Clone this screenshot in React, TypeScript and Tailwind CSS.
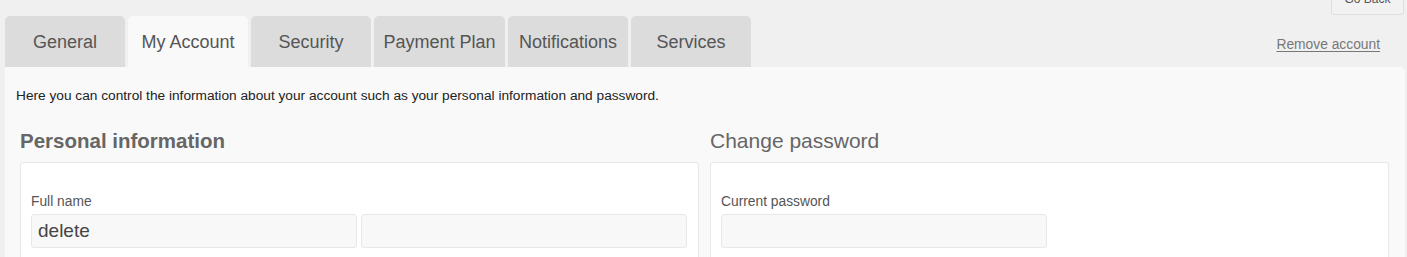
const TABS = ['General', 'My Account', 'Security', 'Payment Plan', 'Notifications', 'Services'];

function Tab({ label, active }: { label: string; active: boolean }) {
  const width = label === 'Payment Plan' ? 'w-[131px]' : 'w-[120px]';
  return (
    <div
      className={`${width} h-[51px] flex items-center justify-center pt-[2px] rounded-t-[5px] text-[18px] text-[#555] ${
        active ? 'bg-[#f9f9f9]' : 'bg-[#dcdcdc]'
      }`}
    >
      {label}
    </div>
  );
}

function Input({ value }: { value?: string }) {
  return (
    <div className="w-[326px] h-[34px] flex items-center px-[6px] pt-[1px] bg-[#f8f8f8] border border-[#e8e8e8] rounded-[3px] text-[19px] text-[#444]">
      {value}
    </div>
  );
}

export default function App() {
  return (
    <div
      className="h-[257px] overflow-hidden bg-[#f0f0f0] pl-[5px] pr-[2px]"
      style={{ fontFamily: '"Liberation Sans", Arial, sans-serif' }}
    >
      {/* header: tabs + actions */}
      <div className="flex justify-between">
        <div className="flex gap-[3px] pt-[16px]">
          {TABS.map((t) => (
            <Tab key={t} label={t} active={t === 'My Account'} />
          ))}
        </div>
        <div className="flex flex-col items-end">
          <button className="mt-[-17px] mr-[1px] w-[73px] h-[32px] border border-[#dedede] rounded-[3px] bg-[#f2f2f2] text-[12px] text-[#555] leading-[14px]">
            Go Back
          </button>
          <a href="#" className="mt-[22px] mr-[25px] text-[13.8px] leading-[16px] text-[#777] underline underline-offset-[2px]">
            Remove account
          </a>
        </div>
      </div>

      {/* panel */}
      <div className="bg-[#f9f9f9] rounded-tr-[5px] pl-[11px] pr-[16px] pt-[22px] h-[300px]">
        <p className="text-[13.7px] text-[#222] leading-[14px]">
          Here you can control the information about your account such as your personal information and password.
        </p>
        <div className="grid grid-cols-2 gap-[11px] pl-[4px] mt-[27px]">
          <div>
            <h2 className="text-[20.5px] font-bold text-[#666] leading-[22px]">Personal information</h2>
            <div className="mt-[10px] bg-white border border-[#e8e8e8] rounded-[3px] px-[10px] pt-[32px] h-[120px]">
              <div className="text-[13.8px] text-[#555] leading-[14px]">Full name</div>
              <div className="flex gap-[4px] mt-[5px]">
                <Input value="delete" />
                <Input />
              </div>
            </div>
          </div>
          <div>
            <h2 className="text-[21px] text-[#666] leading-[22px]">Change password</h2>
            <div className="mt-[10px] bg-white border border-[#e8e8e8] rounded-[3px] px-[10px] pt-[32px] h-[120px]">
              <div className="text-[13.8px] text-[#555] leading-[14px]">Current password</div>
              <div className="flex mt-[5px]">
                <Input />
              </div>
            </div>
          </div>
        </div>
      </div>
    </div>
  );
}
